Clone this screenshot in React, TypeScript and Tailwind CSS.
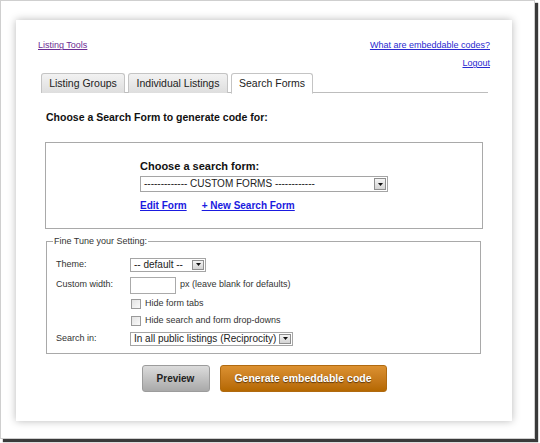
import React from 'react';

// Small fake dropdown used by the select boxes
const Select = ({ value, className = '' }: { value: string; className?: string }) => (
  <div className={`flex items-stretch border border-[#a5a5a5] bg-white ${className}`}>
    <div className="flex-1 flex items-center px-[3px] text-[10px] leading-none text-[#222] whitespace-nowrap overflow-hidden">{value}</div>
    <div className="w-[12px] m-[1px] flex items-center justify-center border border-[#8f8f8f] bg-gradient-to-b from-[#f4f4f4] to-[#d4d4d4]">
      <svg width="5" height="3" viewBox="0 0 5 3"><path d="M0 0h5L2.5 3z" fill="#111" /></svg>
    </div>
  </div>
);

const tabs = [
  { label: 'Listing Groups', w: 'w-[84px]', active: false },
  { label: 'Individual Listings', w: 'w-[100px]', active: false },
  { label: 'Search Forms', w: 'w-[82px]', active: true },
];

export default function App() {
  return (
    <div className="w-[540px] h-[443px] bg-white" style={{ fontFamily: '"Liberation Sans", Arial, sans-serif' }}>
      <div className="w-[535px] h-[439px] bg-white border border-[#cfcfcf] shadow-[3px_3px_1px_#3a3a3a] pt-[19px] pl-[15px]">
        <div className="w-[496px] h-[401px] bg-white shadow-[0_0_8px_rgba(0,0,0,0.28)] px-[22px] pt-[20px]">
          {/* top links */}
          <div className="flex justify-between items-center h-[12px] text-[9px]">
            <a className="text-[#6c2d94] underline">Listing Tools</a>
            <a className="text-[#2a2ad0] underline">What are embeddable codes?</a>
          </div>
          <div className="flex justify-end items-center h-[12px] mt-[6px] text-[9px]">
            <a className="text-[#2a2ad0] underline">Logout</a>
          </div>

          {/* tabs */}
          <div className="flex gap-[3px] ml-[3px] mr-[2px] mt-[3px] h-[20px] border-b border-[#bdbdbd]">
            {tabs.map(t => (
              <div
                key={t.label}
                className={`${t.w} flex items-center justify-center rounded-t-[3px] border border-[#c4c4c4] text-[10.5px] text-[#222] ${
                  t.active ? 'bg-white border-b-white h-[21px]' : 'bg-gradient-to-b from-[#f2f2f2] to-[#dedede] border-b-0 h-[20px]'
                }`}
              >
                {t.label}
              </div>
            ))}
          </div>

          <div className="ml-[8px] mt-[19px] h-[12px] flex items-center text-[10.5px] font-bold text-[#111]">
            Choose a Search Form to generate code for:
          </div>

          {/* search form box */}
          <div className="mx-[7px] mt-[18px] h-[87px] border border-[#a9a9a9] pl-[94px] pt-[16px]">
            <div className="h-[14px] flex items-center text-[11px] font-bold text-[#111]">Choose a search form:</div>
            <Select value="------------- CUSTOM FORMS ------------" className="w-[248px] h-[16px] mt-[3px]" />
            <div className="flex gap-[15px] mt-[7px] h-[12px] items-center text-[10px] font-bold text-[#1a1ae0]">
              <a className="underline">Edit Form</a>
              <a className="underline">+ New Search Form</a>
            </div>
          </div>

          {/* fine tune fieldset */}
          <fieldset className="ml-[8px] mr-[9px] mt-[6px] h-[119px] border border-[#a9a9a9] pl-[9px] pr-2 pb-0 pt-[9px] text-[9px] text-[#333]">
            <legend className="ml-[-3px] px-[1px] text-[9px] text-[#333]">Fine Tune your Setting:</legend>
            <div className="flex items-center h-[14px]">
              <span className="w-[74px]">Theme:</span>
              <Select value="-- default --" className="w-[76px] h-[14px]" />
            </div>
            <div className="flex items-center h-[17px] mt-[5px]">
              <span className="w-[74px]">Custom width:</span>
              <div className="w-[46px] h-[17px] border border-[#aaa] bg-white" />
              <span className="ml-[4px]">px (leave blank for defaults)</span>
            </div>
            <div className="flex items-center h-[12px] ml-[75px] mt-[4px]">
              <span className="w-[10px] h-[10px] border border-[#9a9a9a] bg-gradient-to-br from-[#e2e2e2] to-[#fafafa]" />
              <span className="ml-[4px]">Hide form tabs</span>
            </div>
            <div className="flex items-center h-[12px] ml-[75px] mt-[5px]">
              <span className="w-[10px] h-[10px] border border-[#9a9a9a] bg-gradient-to-br from-[#e2e2e2] to-[#fafafa]" />
              <span className="ml-[4px]">Hide search and form drop-downs</span>
            </div>
            <div className="flex items-center h-[14px] mt-[5px]">
              <span className="w-[74px]">Search in:</span>
              <Select value="In all public listings (Reciprocity)" className="w-[163px] h-[14px]" />
            </div>
          </fieldset>

          {/* buttons */}
          <div className="flex justify-center gap-[10px] mt-[11px]">
            <button className="w-[68px] h-[27px] rounded-[3px] border border-[#9c9c9c] bg-gradient-to-b from-[#dcdcdc] to-[#a9a9a9] text-[10px] font-bold text-[#222]">
              Preview
            </button>
            <button className="w-[167px] h-[27px] rounded-[3px] border border-[#b06a10] bg-gradient-to-b from-[#dc9130] to-[#b56800] text-[10.5px] font-bold text-white [text-shadow:0_1px_1px_rgba(0,0,0,0.55)]">
              Generate embeddable code
            </button>
          </div>
        </div>
      </div>
    </div>
  );
}
